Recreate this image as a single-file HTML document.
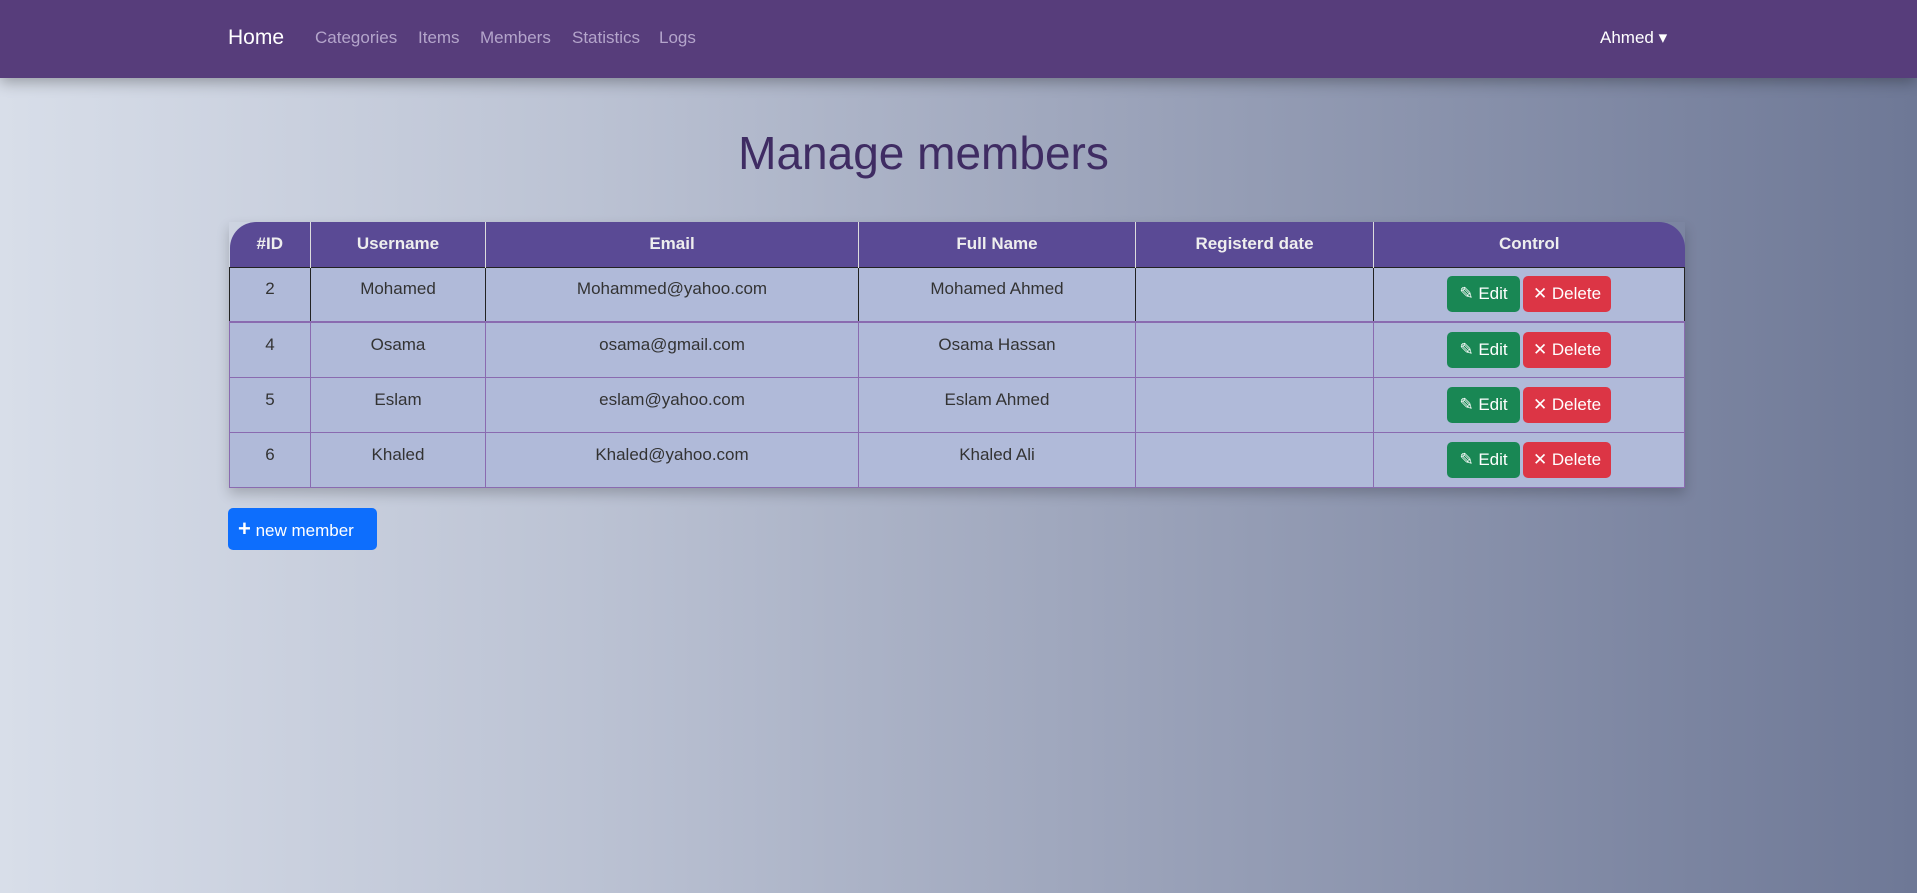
<!DOCTYPE html>
<html><head><meta charset="utf-8"><style>
*{box-sizing:border-box;margin:0;padding:0}
body{width:1917px;height:893px;overflow:hidden;font-family:"Liberation Sans",sans-serif;background:linear-gradient(90deg,#d8dee9 0%,#bcc3d4 30%,#9aa2b9 60%,#6e7896 100%);position:relative}
nav{position:absolute;left:0;top:0;width:1917px;height:78px;background:#573d7b;box-shadow:0 4px 14px rgba(0,0,0,.3)}
nav a{position:absolute;top:28px;color:#b4a5cb;font-size:17px;text-decoration:none}
nav .home{left:228px;top:26px;color:#fff;font-size:21px}
h1{position:absolute;left:0;width:1847px;text-align:center;top:126px;font-size:46px;font-weight:normal;color:#3f2c63}
table{position:absolute;left:229px;top:222px;width:1456px;border-collapse:collapse;box-shadow:0 6px 12px rgba(0,0,0,.2)}
th{background:#5a4a95;color:#eee;font-size:17px;height:45px;border-left:1px solid #ddd}
th:first-child{border-left:none;border-top-left-radius:26px}
th:last-child{border-top-right-radius:26px}
td{background:#b0bad9;color:#333;font-size:17px;text-align:center;border:1px solid #8a6bb0;height:55px;padding-bottom:10px}
tr.r1 td{border-color:#222;border-bottom:2px solid #8a6bb0}
.b{display:inline-block;height:36px;line-height:36px;border-radius:5px;color:#fff;font-size:17px;padding:0 8px;vertical-align:middle}
.e{background:#198754;width:73px}.d{background:#dc3545;width:88px;margin-left:3px}
td.c{padding-bottom:0}
.nm{position:absolute;left:228px;top:508px;width:149px;height:42px;background:#0d6efd;border-radius:5px;color:#fff;font-size:17px;line-height:42px;padding-left:10px}
</style></head><body>
<nav><a class="home" href="#">Home</a><a href="#" style="left:315px">Categories</a><a href="#" style="left:418px">Items</a><a href="#" style="left:480px">Members</a><a href="#" style="left:572px">Statistics</a><a href="#" style="left:659px">Logs</a><a href="#" style="left:1600px;color:#fff">Ahmed ▾</a></nav>
<h1>Manage members</h1>
<table>
<tr><th style="width:81px">#ID</th><th style="width:175px">Username</th><th style="width:373px">Email</th><th style="width:277px">Full Name</th><th style="width:238px">Registerd date</th><th>Control</th></tr>
<tr class="r1"><td>2</td><td>Mohamed</td><td>Mohammed@yahoo.com</td><td>Mohamed Ahmed</td><td></td><td class="c"><span class="b e">✎ Edit</span><span class="b d">✕ Delete</span></td></tr>
<tr><td>4</td><td>Osama</td><td>osama@gmail.com</td><td>Osama Hassan</td><td></td><td class="c"><span class="b e">✎ Edit</span><span class="b d">✕ Delete</span></td></tr>
<tr><td>5</td><td>Eslam</td><td>eslam@yahoo.com</td><td>Eslam Ahmed</td><td></td><td class="c"><span class="b e">✎ Edit</span><span class="b d">✕ Delete</span></td></tr>
<tr><td>6</td><td>Khaled</td><td>Khaled@yahoo.com</td><td>Khaled Ali</td><td></td><td class="c"><span class="b e">✎ Edit</span><span class="b d">✕ Delete</span></td></tr>
</table>
<div class="nm"><b style="font-size:22px">+</b> new member</div>
</body></html>
